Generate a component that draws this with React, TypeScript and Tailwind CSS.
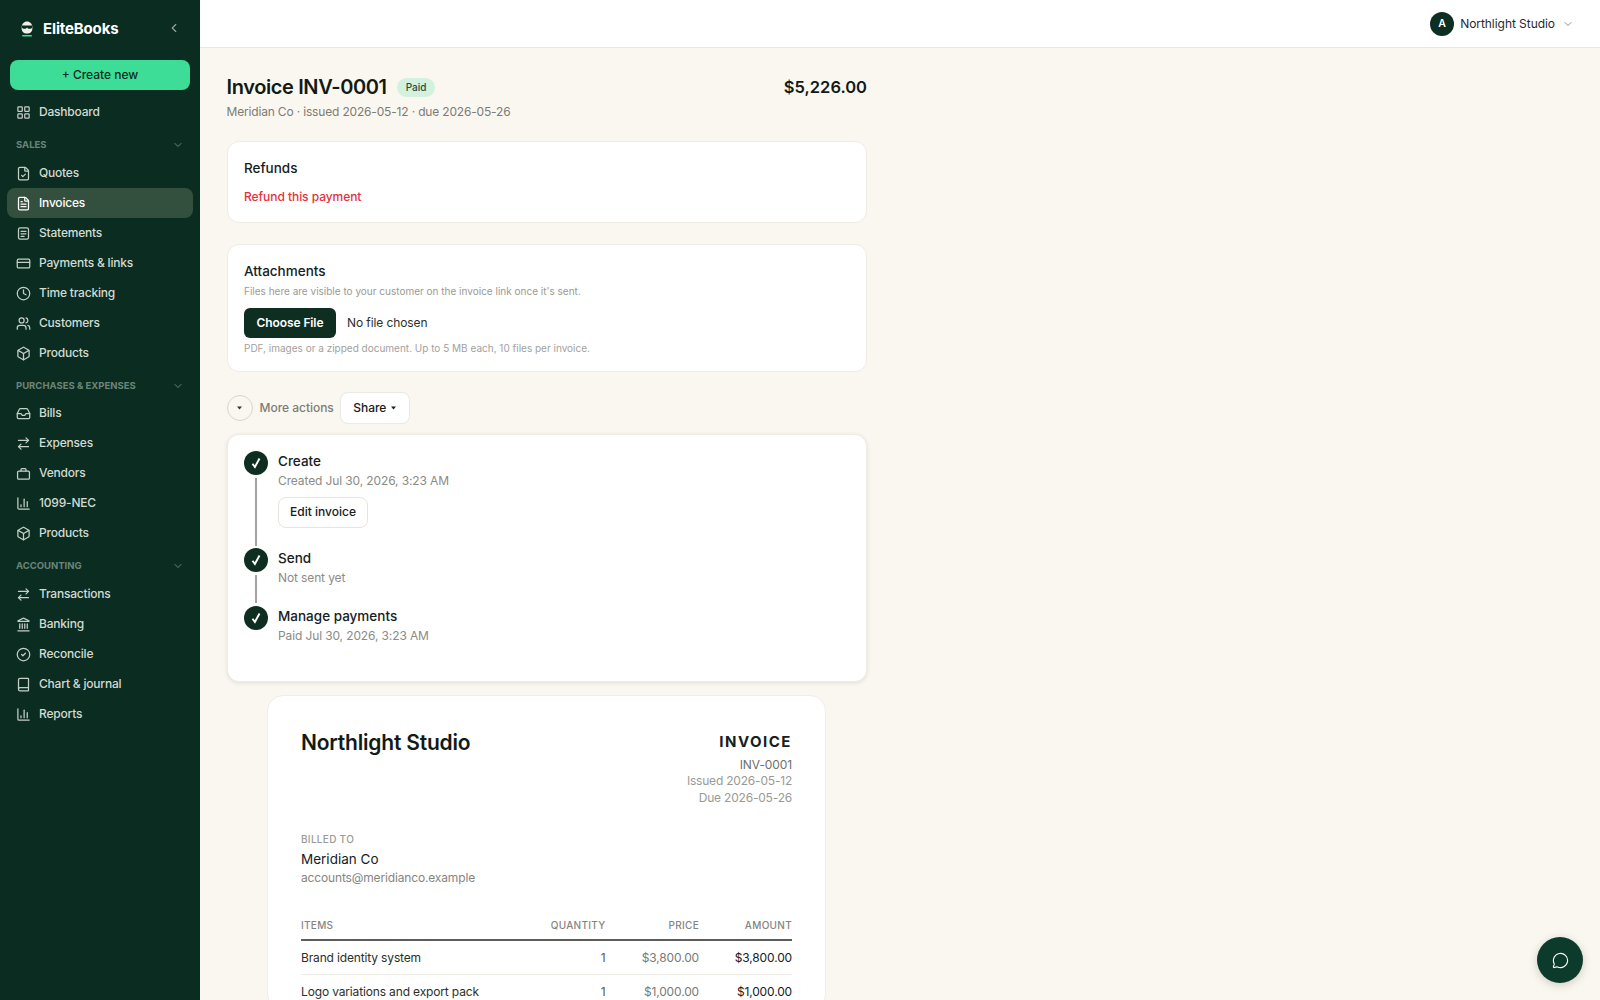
import React from "react";
import { LayoutGrid, ChevronDown, ChevronLeft, FileCheck, FileText, CreditCard, Clock, Users, Box, Inbox, ArrowRightLeft, ChartColumn, Landmark, CircleCheck, Book, MessageCircle } from "lucide-react";

const H = { fontFamily: '"Inter", "Liberation Sans", sans-serif' };

function StatementIcon({ size, strokeWidth, className }: any) {
  return (
    <svg width={size} height={size} viewBox="0 0 24 24" fill="none" stroke="currentColor" strokeWidth={strokeWidth} strokeLinecap="round" strokeLinejoin="round" className={className}>
      <rect x="4" y="3" width="16" height="18" rx="2.5" />
      <path d="M8 8.5h8M8 12.5h8M8 16.5h5" />
    </svg>
  );
}

function CaseIcon({ size, strokeWidth, className }: any) {
  return (
    <svg width={size} height={size} viewBox="0 0 24 24" fill="none" stroke="currentColor" strokeWidth={strokeWidth} strokeLinecap="round" strokeLinejoin="round" className={className}>
      <rect x="2.5" y="8" width="19" height="13" rx="2" />
      <path d="M8 8V5.5A1.5 1.5 0 0 1 9.5 4h5A1.5 1.5 0 0 1 16 5.5V8" />
    </svg>
  );
}

function NavRow({ icon: Icon, label, active }: { icon: any; label: string; active?: boolean }) {
  return (
    <div className={`mx-[7px] flex h-[30px] items-center gap-[8px] rounded-lg pl-[9px] text-[12px] font-medium tracking-[-0.2px] ${active ? "bg-[#33503f] text-white" : "text-[#d3dbd3]"}`}>
      <Icon size={15} strokeWidth={2} className={active ? "text-white" : "text-[#c5cec7]"} />
      <span>{label}</span>
    </div>
  );
}

function Section({ label, mt }: { label: string; mt: string }) {
  return (
    <div className={`${mt} flex h-[14px] items-center justify-between pl-[16px] pr-[16px] text-[9.5px] font-bold uppercase text-[#6a8577]`}>
      <span>{label}</span>
      <ChevronDown size={12} />
    </div>
  );
}

function Step({ title, sub, line, children, h }: { title: string; sub: string; line?: string; children?: React.ReactNode; h: string }) {
  return (
    <div className={`flex gap-[10px] ${h}`}>
      <div className="flex w-[24px] flex-col items-center">
        <div className="flex h-[24px] w-[24px] shrink-0 items-center justify-center rounded-full bg-[#0f2e22]">
          <svg width="10" height="12" viewBox="0 0 10 12" fill="none" stroke="#fff" strokeWidth="1.9"><path d="M1.5 6.8 3.9 10 8.5 1.5" /></svg>
        </div>
        {line && <div className={`mt-[3px] w-[2px] bg-[#a3a3a0] ${line}`} />}
      </div>
      <div className="pt-[1px]">
        <div className="text-[13.5px] font-medium leading-[18px] text-[#16211c]">{title}</div>
        <div className="mt-[2px] text-[12px] leading-[18px] tracking-[-0.12px] text-[#8b8b85]">{sub}</div>
        {children}
      </div>
    </div>
  );
}

function ItemRow({ name, price, border }: { name: string; price: string; border?: boolean }) {
  return (
    <div className={`flex h-[34px] items-center text-[12px] tracking-[-0.15px] ${border ? "border-b border-[#efede8]" : ""}`}>
      <span className="flex-1 text-[#2a2f2c]">{name}</span>
      <span className="w-[60px] text-right text-[#55595a]">1</span>
      <span className="w-[93.5px] text-right text-[#7a7a75]">{price}</span>
      <span className="w-[93px] text-right text-[#16211c]">{price}</span>
    </div>
  );
}

export default function App() {
  return (
    <div className="flex h-screen overflow-hidden bg-[#faf7f0] text-[#16211c]" style={H}>
      <aside className="flex w-[200px] shrink-0 flex-col bg-[#0b2c21]">
        <div className="flex h-[60px] items-start justify-between pl-[20px] pr-[19px] pt-[18px]">
          <div className="flex items-center gap-[9px]">
            <svg width="14" height="18" viewBox="0 0 14 18">
              <path d="M1.6 8C1.6 4 4 1.6 7 1.6S12.4 4 12.4 8 10 13.6 7 13.6 1.6 12 1.6 8z" fill="#f1f1ec" />
              <path d="M2 5.5h10v2.4l-1.4.9H8.2L7 7.6 5.8 8.8H3.4L2 7.9z" fill="#0b2c21" />
              <rect x="2.2" y="15" width="9.6" height="1.5" fill="#3ddc97" />
            </svg>
            <span className="text-[15px] font-bold tracking-[-0.01em] text-white">EliteBooks</span>
          </div>
          <ChevronLeft size={14} className="mt-[3px] text-[#90a59a]" />
        </div>
        <button className="mx-[10px] h-[30px] rounded-lg bg-[#3ddc97] text-[12px] font-medium text-[#0b2c21]">+ Create new</button>
        <div className="mt-[7px]"><NavRow icon={LayoutGrid} label="Dashboard" /></div>
        <Section label="Sales" mt="mt-[11px]" />
        <div className="mt-[6px]">
          <NavRow icon={FileCheck} label="Quotes" />
          <NavRow icon={FileText} label="Invoices" active />
          <NavRow icon={StatementIcon} label="Statements" />
          <NavRow icon={CreditCard} label="Payments & links" />
          <NavRow icon={Clock} label="Time tracking" />
          <NavRow icon={Users} label="Customers" />
          <NavRow icon={Box} label="Products" />
        </div>
        <Section label="Purchases & Expenses" mt="mt-[11px]" />
        <div className="mt-[5px]">
          <NavRow icon={Inbox} label="Bills" />
          <NavRow icon={ArrowRightLeft} label="Expenses" />
          <NavRow icon={CaseIcon} label="Vendors" />
          <NavRow icon={ChartColumn} label="1099-NEC" />
          <NavRow icon={Box} label="Products" />
        </div>
        <Section label="Accounting" mt="mt-[11px]" />
        <div className="mt-[6px]">
          <NavRow icon={ArrowRightLeft} label="Transactions" />
          <NavRow icon={Landmark} label="Banking" />
          <NavRow icon={CircleCheck} label="Reconcile" />
          <NavRow icon={Book} label="Chart & journal" />
          <NavRow icon={ChartColumn} label="Reports" />
        </div>
      </aside>

      <main className="relative min-w-0 flex-1">
        <header className="flex h-[48px] items-center justify-end border-b border-[#e9e7e1] bg-white pr-[26px]">
          <div className="flex h-[24px] w-[24px] items-center justify-center rounded-full bg-[#0f2e22] text-[10.5px] font-semibold text-white">A</div>
          <span className="ml-[6px] text-[12px] tracking-[-0.05px] text-[#1f2a33]">Northlight Studio</span>
          <ChevronDown size={12} className="ml-[7px] text-[#8f8f8b]" />
        </header>

        <div className="ml-[26.5px] w-[640.5px]">
          <div className="mt-[27px] flex items-center justify-between">
            <div className="flex items-center gap-[10px]">
              <h1 className="text-[20px] font-semibold leading-[24px] tracking-[-0.38px] text-[#121a16]">Invoice INV-0001</h1>
              <span className="rounded-full bg-[#d3f1df] px-[9px] py-[2px] text-[10px] font-medium text-[#2a4a3b]">Paid</span>
            </div>
            <div className="text-[16.5px] font-semibold text-[#121a16]">$5,226.00</div>
          </div>
          <p className="mt-[3px] text-[12px] leading-[18px] tracking-[-0.17px] text-[#7c7c76]">Meridian Co · issued 2026-05-12 · due 2026-05-26</p>

          <section className="mt-[20px] h-[82px] rounded-xl border border-[#efece6] bg-white pl-[16.5px] pt-[17px]">
            <h2 className="text-[13.5px] font-medium leading-[18px] text-[#16211c]">Refunds</h2>
            <div className="mt-[11px] text-[12px] font-medium leading-[18px] tracking-[-0.05px] text-[#e5303a]">Refund this payment</div>
          </section>

          <section className="mt-[21px] h-[128px] rounded-xl border border-[#efece6] bg-white pl-[16.5px] pt-[17px]">
            <h2 className="text-[13.5px] font-medium leading-[18px] text-[#16211c]">Attachments</h2>
            <p className="mt-[3px] text-[10px] leading-[16px] text-[#9a9a94]">Files here are visible to your customer on the invoice link once it's sent.</p>
            <div className="mt-[9px] flex items-center">
              <button className="h-[30px] w-[92px] rounded-md bg-[#0f2e22] text-[12px] font-semibold tracking-[-0.1px] text-white">Choose File</button>
              <span className="ml-[11px] text-[12px] tracking-[-0.1px] text-[#2a2f2c]">No file chosen</span>
            </div>
            <p className="mt-[2px] text-[10px] leading-[16px] text-[#a2a29c]">PDF, images or a zipped document. Up to 5 MB each, 10 files per invoice.</p>
          </section>

          <div className="mt-[20px] flex h-[32px] items-center">
            <div className="flex h-[26px] w-[26px] items-center justify-center rounded-full border border-[#d8d5cd]">
              <svg width="5" height="4" viewBox="0 0 5 4"><path d="M0 .5h5L2.5 3.5z" fill="#333" /></svg>
            </div>
            <span className="ml-[7px] text-[12px] font-medium tracking-[-0.03px] text-[#7d7d76]">More actions</span>
            <button className="ml-[6px] flex h-[32px] w-[70px] items-center justify-center gap-[5px] rounded-lg border border-[#ebe9e3] bg-white text-[12px] font-medium text-[#16211c]">
              Share
              <svg width="5" height="4" viewBox="0 0 5 4"><path d="M0 .5h5L2.5 3.5z" fill="#16211c" /></svg>
            </button>
          </div>

          <section className="mt-[10px] h-[248px] rounded-xl border border-[#efece6] bg-white pl-[16.5px] pt-[16px] shadow-[0_1px_4px_rgba(0,0,0,0.1)]">
            <Step title="Create" sub="Created Jul 30, 2026, 3:23 AM" line="h-[68px]" h="h-[97px]">
              <button className="mt-[7px] h-[31px] w-[90px] rounded-lg border border-[#e6e4de] bg-white text-[12px] font-medium text-[#16211c]">Edit invoice</button>
            </Step>
            <Step title="Send" sub="Not sent yet" line="h-[28px]" h="h-[58px]" />
            <Step title="Manage payments" sub="Paid Jul 30, 2026, 3:23 AM" h="h-[50px]" />
          </section>

          <section className="ml-[40.5px] mt-[13px] w-[559px] rounded-2xl border border-[#f1eee8] bg-white px-[33px] pt-[33px]">
            <div className="flex items-start justify-between">
              <h2 className="text-[21px] font-semibold leading-[28px] tracking-[-0.2px] text-[#121a16]">Northlight Studio</h2>
              <div className="text-right">
                <div className="text-[15px] font-bold leading-[26px] tracking-[0.1em] text-[#16211c]">INVOICE</div>
                <div className="mt-[2px] text-[12px] leading-[16.5px] tracking-[-0.1px] text-[#6f6f6a]">INV-0001</div>
                <div className="text-[12px] leading-[16.5px] tracking-[-0.2px] text-[#9a9a94]">Issued 2026-05-12</div>
                <div className="text-[12px] leading-[16.5px] tracking-[-0.2px] text-[#9a9a94]">Due 2026-05-26</div>
              </div>
            </div>
            <div className="mt-[25px] text-[10px] font-medium leading-[16px] tracking-[0.03em] text-[#9a9a94]">BILLED TO</div>
            <div className="mt-[2px] text-[13.5px] leading-[20px] text-[#16211c]">Meridian Co</div>
            <div className="text-[12px] leading-[18px] tracking-[-0.15px] text-[#85857f]">accounts@meridianco.example</div>
            <div className="mt-[32px] flex h-[22px] items-center border-b-2 border-[#5d5d5b] pb-[8px] text-[10px] font-medium tracking-[0.03em] text-[#85857f]">
              <span className="flex-1">ITEMS</span>
              <span className="w-[70px] text-right">QUANTITY</span>
              <span className="w-[93.5px] text-right">PRICE</span>
              <span className="w-[93px] text-right">AMOUNT</span>
            </div>
            <ItemRow name="Brand identity system" price="$3,800.00" border />
            <ItemRow name="Logo variations and export pack" price="$1,000.00" />
          </section>
        </div>

        <button className="absolute bottom-[17px] right-[17px] flex h-[46px] w-[46px] items-center justify-center rounded-full bg-[#0c3a2b] shadow-[0_2px_10px_rgba(0,0,0,0.18)]">
          <MessageCircle size={17} strokeWidth={1.6} className="text-white" />
        </button>
      </main>
    </div>
  );
}
